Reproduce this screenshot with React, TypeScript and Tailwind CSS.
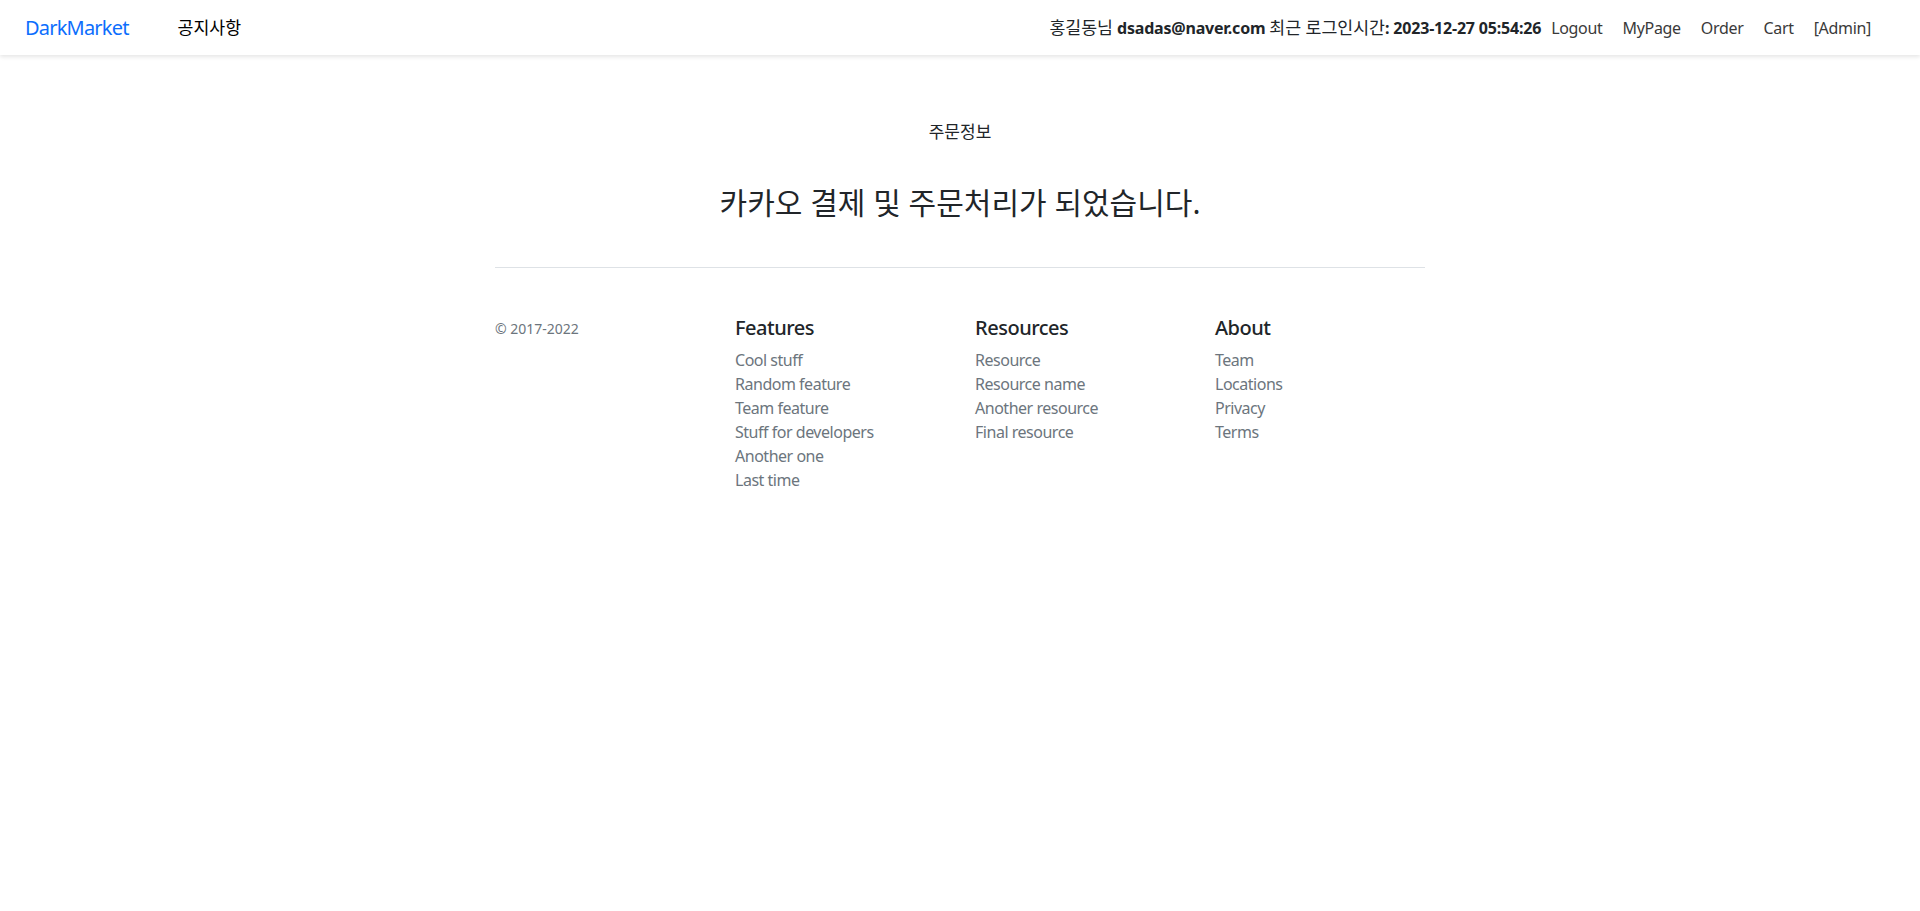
const features = ["Cool stuff", "Random feature", "Team feature", "Stuff for developers", "Another one", "Last time"]
const resources = ["Resource", "Resource name", "Another resource", "Final resource"]
const about = ["Team", "Locations", "Privacy", "Terms"]

// Korean glyphs render a touch narrower here than in the original, so bump them slightly
function Ko({ children }: { children: React.ReactNode }) {
  return <span className="text-[1.08em] leading-[0] tracking-normal">{children}</span>
}

function FooterCol({ title, items }: { title: string; items: string[] }) {
  return (
    <div className="w-[240px] shrink-0">
      <h5 className="mb-2 text-[20px] font-medium leading-[24px] text-[#212529]">{title}</h5>
      <ul>
        {items.map((item) => (
          <li key={item} className="text-[16px] leading-[24px] text-[#6c757d]">
            <a href="#">{item}</a>
          </li>
        ))}
      </ul>
    </div>
  )
}

export default function App() {
  const navLinks = ["Logout", "MyPage", "Order", "Cart", "[Admin]"]

  return (
    <div className="min-h-screen bg-white font-['Noto_Sans','Noto_Sans_CJK_KR',sans-serif] tracking-[-0.03em] text-[#212529]">
      <nav className="flex h-[55px] items-center justify-between bg-white pl-[25px] pr-[49px] shadow-[0_2px_4px_rgba(0,0,0,0.1)]">
        <div className="flex items-center">
          <a href="#" className="text-[20px] leading-[30px] tracking-[-0.04em] text-[#0d6efd]">DarkMarket</a>
          <a href="#" className="ml-[49px] text-[16px] leading-[24px] text-black"><Ko>공지사항</Ko></a>
        </div>
        <div className="flex items-center text-[16px] leading-[24px]">
          <span className="mr-[10px] tracking-[-0.012em] text-[#212529]">
            <Ko>홍길동님</Ko> <b>dsadas@naver.com</b> <Ko>최근 로그인시간</Ko><b>: 2023-12-27 05:54:26</b>
          </span>
          <div className="flex items-center gap-[20px]">
            {navLinks.map((l) => (
              <a key={l} href="#" className="tracking-[-0.02em] text-[#3a3a3a]">{l}</a>
            ))}
          </div>
        </div>
      </nav>

      <main className="mx-auto w-[930px] pt-[65px] text-center tracking-normal">
        <div className="text-[17px] leading-[24px]">주문정보</div>
        <h3 className="mt-[41px] pb-[46px] text-[30px] font-normal leading-[36px]">카카오 결제 및 주문처리가 되었습니다.</h3>
      </main>

      <footer className="mx-auto w-[930px] border-t border-[#dee2e6] pt-[48px]">
        <div className="flex">
          <div className="w-[240px] shrink-0">
            <small className="text-[14px] leading-[21px] tracking-normal text-[#6c757d]">© 2017-2022</small>
          </div>
          <FooterCol title="Features" items={features} />
          <FooterCol title="Resources" items={resources} />
          <FooterCol title="About" items={about} />
        </div>
      </footer>
    </div>
  )
}
